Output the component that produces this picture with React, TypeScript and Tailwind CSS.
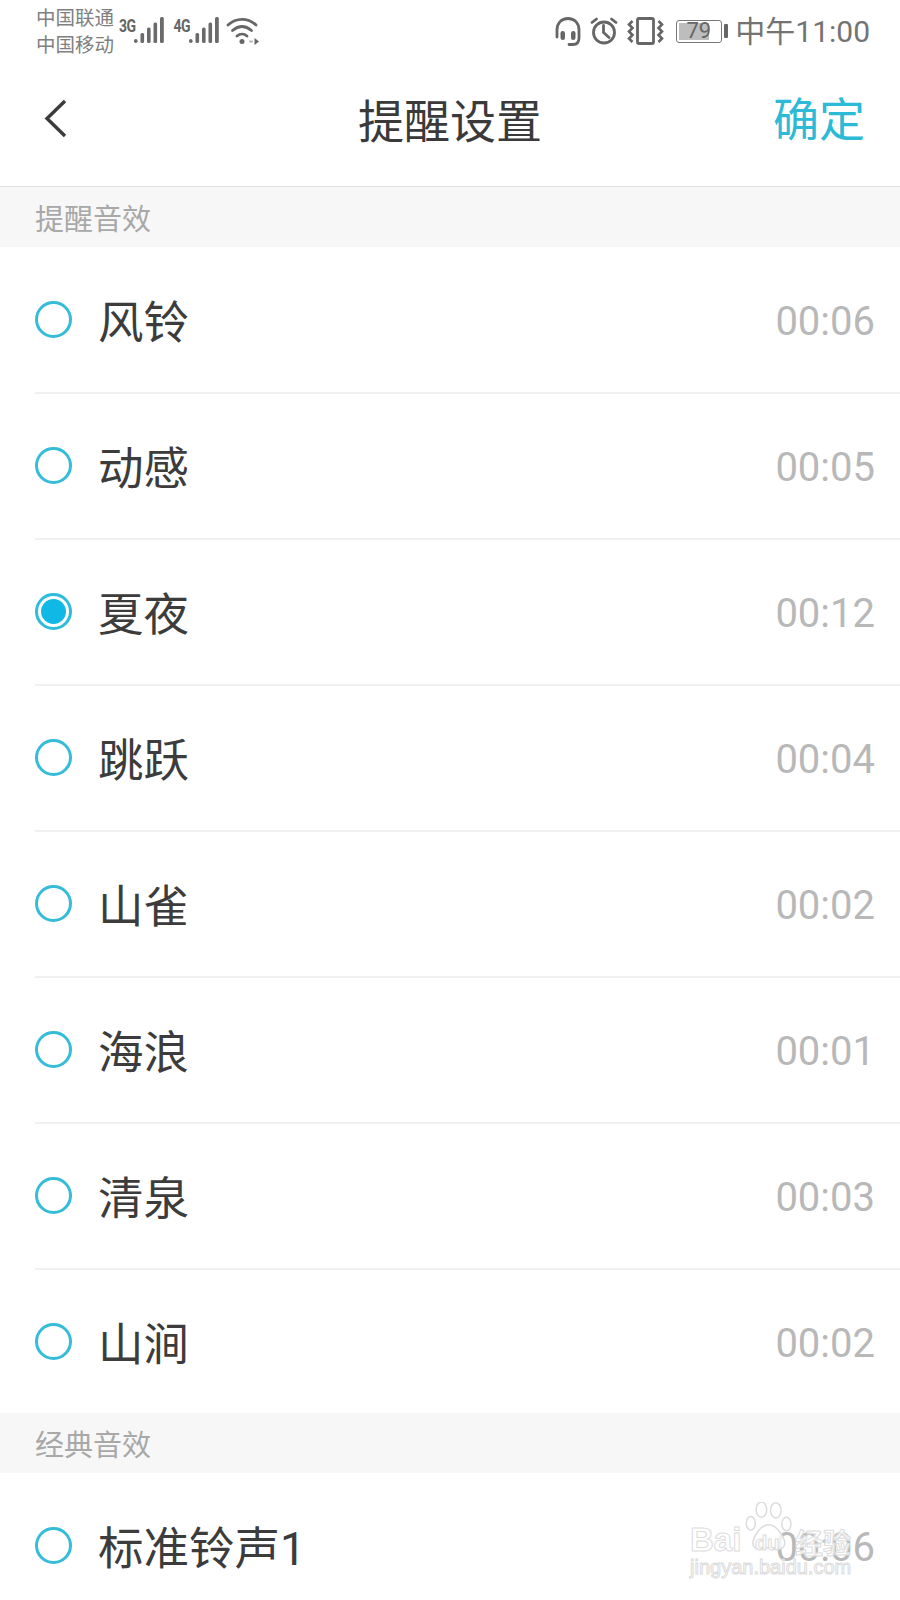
const CJK = "font-['Roboto','Noto_Sans_CJK_SC','Noto_Sans',sans-serif]";

function Signal({ label }: { label: string }) {
  return (
    <div className="relative h-[30px] w-[54.5px]">
      <span className="absolute left-0 top-[-2px] origin-top-left scale-y-[1.25] font-['Roboto',sans-serif] text-[14px] font-bold leading-[18px] tracking-[-0.5px] text-[#666]">{label}</span>
      <svg className="absolute left-[15px] top-[1px]" width="30" height="27" viewBox="0 0 30 27" fill="#6a6a6a">
        <rect x="0" y="22" width="3.600" height="4" rx="1.800" />
        <rect x="6.500" y="16" width="3.600" height="10" rx="1.500" />
        <rect x="13" y="10.500" width="3.600" height="15.500" rx="1.500" />
        <rect x="19.500" y="5.500" width="3.600" height="20.500" rx="1.500" />
        <rect x="26" y="0" width="3.800" height="26" rx="1.500" />
      </svg>
    </div>
  );
}

function StatusBar() {
  return (
    <div className={`flex h-[62px] items-center justify-between pl-9 pr-[30px] text-[#666] ${CJK}`}>
      <div className="flex items-center">
        <div className="mt-[2px] flex w-[83px] flex-col text-[19.500px] leading-[27px] text-[#808080]">
          <span>中国联通</span>
          <span>中国移动</span>
        </div>
        <div className="mt-[-1px] flex items-center">
          <Signal label="3G" />
          <Signal label="4G" />
        </div>
        <svg className="ml-[-2px] mt-[-1px]" width="34" height="28" viewBox="0 0 34 28" fill="none" stroke="#666" strokeWidth="2.800" strokeLinecap="round">
          <path d="M2 8C10 0.500 22 0.500 30 8" />
          <path d="M6.500 13.500C13 8 19 8 25.500 13.500" />
          <path d="M11 19C14 16.500 18 16.500 21 19" />
          <circle cx="16" cy="24.500" r="2.500" fill="#666" stroke="none" />
          <path d="M24 24.500H26" stroke="#b5b5b5" strokeWidth="2" />
          <path d="M28.500 21L33 24.500L28.500 28Z" fill="#666" stroke="none" />
        </svg>
      </div>
      <div className="flex items-center">
        <svg width="26" height="29" viewBox="0 0 26 29" fill="none" stroke="#666" strokeWidth="2.800" strokeLinecap="round">
          <path d="M2 20V13C2 6 6.500 1.500 13 1.500S24 6 24 13V21C24 25.500 22 27.500 18 27.500H14" />
          <rect x="5.500" y="14" width="4.500" height="9" rx="2.200" fill="#666" stroke="none" />
          <rect x="16" y="14" width="4.500" height="9" rx="2.200" fill="#666" stroke="none" />
        </svg>
        <svg className="ml-[9px]" width="28" height="28" viewBox="0 0 28 28" fill="none" stroke="#666" strokeWidth="2.800" strokeLinecap="round">
          <circle cx="14" cy="15.500" r="10.500" />
          <path d="M13.500 8.500V15.500L19 20.500" />
          <path d="M2 5.500L6.500 2M26 5.500L21.500 2" />
        </svg>
        <svg className="ml-[9px]" width="37" height="28" viewBox="0 0 37 28" fill="none" stroke="#666" strokeWidth="2.600">
          <rect x="10.500" y="1.500" width="16" height="25" rx="1.500" strokeWidth="2.800" />
          <path d="M5.500 4L2 7.500L5.500 11L2 14.500L5.500 18L2 21.500L5.500 25" />
          <path d="M31.500 4L35 7.500L31.500 11L35 14.500L31.500 18L35 21.500L31.500 25" />
        </svg>
        <div className="ml-[12px] flex items-center">
          <div className="relative h-[23px] w-[46px] rounded-[3px] border border-[#777] p-[2px]">
            <div className="h-full w-[30px] bg-[#bdbdbd]" />
            <span className="absolute inset-0 flex items-center justify-center pr-[1px] text-[22px] leading-none text-[#666]">79</span>
          </div>
          <div className="ml-[2px] h-[14px] w-[4px] rounded-[1px] bg-[#666]" />
        </div>
        <span className="ml-[7px] mt-[1px] text-[30px] leading-none text-[#737373]">中午11:00</span>
      </div>
    </div>
  );
}

function NavBar() {
  return (
    <div className={`relative flex h-[125px] items-center justify-center border-b border-[#e4e4e4] ${CJK}`}>
      <svg className="absolute left-[44px] top-[36px]" width="24" height="42" viewBox="0 0 24 42" fill="none" stroke="#3b3b3b" strokeWidth="3.400">
        <path d="M21 3L3 20.500L21 38" />
      </svg>
      <span className="mt-[-4px] text-[46px] leading-none text-[#3a3a3a]">提醒设置</span>
      <span className="absolute right-[35px] top-[35px] text-[46px] leading-none text-[#2cbad6]">确定</span>
    </div>
  );
}

function SectionHeader({ title }: { title: string }) {
  return (
    <div className={`h-[60px] bg-[#f7f7f7] pl-[35px] pt-[19px] text-[29px] leading-none text-[#a8a8a8] ${CJK}`}>
      {title}
    </div>
  );
}

function Row({ name, time, selected, last, first }: { name: string; time: string; selected?: boolean; last?: boolean; first?: boolean }) {
  return (
    <div className={`pl-[35px] ${first ? "mt-px" : ""} ${last ? "h-[143px]" : "h-[146px]"}`}>
      <div className={`flex h-full items-start justify-between pr-[25px] pt-[53px] ${last ? "" : "border-b-2 border-[#f0f0f0]"}`}>
        <div className="flex items-start">
          <div className={`flex h-[37px] w-[37px] items-center justify-center rounded-full border-[3px] ${selected ? "border-[#2dbcdc]" : "border-[#34bcd9]"}`}>
            {selected && <div className="h-[25px] w-[25px] rounded-full bg-[#10b8e6]" />}
          </div>
          <span className={`ml-[26px] text-[45.500px] leading-none text-[#3c3c3c] ${CJK}`}>{name}</span>
        </div>
        <span className="mt-[1px] font-['Roboto',sans-serif] text-[40px] leading-none text-[#b8b8b8]">{time}</span>
      </div>
    </div>
  );
}

function Watermark() {
  const outline = "text-[rgba(255,255,255,0.75)] [-webkit-text-stroke:1px_#dcdcdc]";
  return (
    <div className="pointer-events-none absolute left-[688px] top-[1500px] h-[100px] w-[180px]">
      <svg className="absolute left-[57px] top-[2px]" width="48" height="50" viewBox="0 0 62 66" fill="rgba(255,255,255,0.8)" stroke="#dcdcdc" strokeWidth="2">
        <ellipse cx="7" cy="28" rx="6" ry="9" />
        <ellipse cx="21" cy="10" rx="7" ry="10" />
        <ellipse cx="40" cy="11" rx="7" ry="10" />
        <ellipse cx="54" cy="29" rx="6" ry="9" />
        <path d="M30 30C20 30 12 44 10 52C8 60 16 64 22 62C27 60 34 60 40 62C48 64 54 58 51 50C48 42 40 30 30 30Z" />
      </svg>
      <span className={`absolute left-[2px] top-[23px] font-['Liberation_Sans',sans-serif] text-[33px] font-bold leading-none ${outline}`}>Bai</span>
      <span className={`absolute left-[67px] top-[33px] font-['Liberation_Sans',sans-serif] text-[20px] font-bold leading-none ${outline}`}>du</span>
      <span className={`absolute left-[107px] top-[28px] font-['Noto_Sans_CJK_SC',sans-serif] text-[28px] font-bold leading-none ${outline}`}>经验</span>
      <span className={`absolute left-[2px] top-[57px] font-['Liberation_Sans',sans-serif] text-[20px] leading-none ${outline}`}>jingyan.baidu.com</span>
    </div>
  );
}

export default function App() {
  const rows = [
    ["风铃", "00:06"],
    ["动感", "00:05"],
    ["夏夜", "00:12"],
    ["跳跃", "00:04"],
    ["山雀", "00:02"],
    ["海浪", "00:01"],
    ["清泉", "00:03"],
    ["山涧", "00:02"],
  ];
  return (
    <div className="relative h-[1600px] w-[900px] overflow-hidden bg-white">
      <StatusBar />
      <NavBar />
      <SectionHeader title="提醒音效" />
      {rows.map(([n, t], i) => (
        <Row key={n} name={n} time={t} first={i === 0} selected={n === "夏夜"} last={i === rows.length - 1} />
      ))}
      <SectionHeader title="经典音效" />
      <Row name="标准铃声1" time="00:06" first last />
      <Watermark />
    </div>
  );
}
